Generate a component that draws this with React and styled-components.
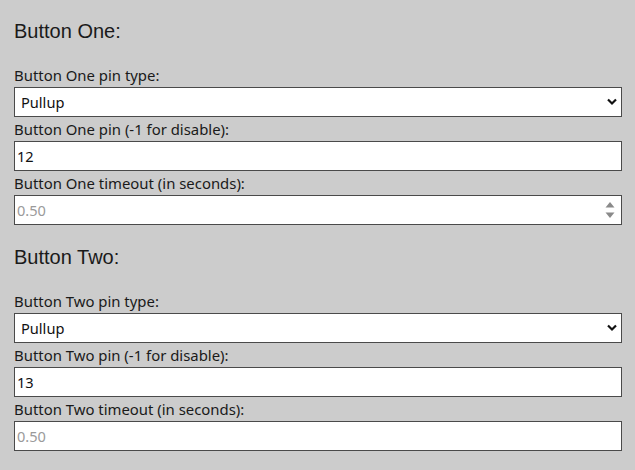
import styled, { createGlobalStyle } from 'styled-components';

const GlobalStyle = createGlobalStyle`
  html, body {
    margin: 0;
    padding: 0;
    background: #cccccc;
  }
  body {
    font-family: 'Noto Sans', 'Open Sans', sans-serif;
    color: #111;
  }
`;

const Page = styled.div`
  display: flex;
  flex-direction: column;
  gap: 20px;
  padding: 19px 13px 0 14px;
`;

const Section = styled.section`
  display: flex;
  flex-direction: column;
`;

const Heading = styled.h2`
  margin: 0 0 20px;
  font-family: 'Liberation Sans', Arial, sans-serif;
  font-weight: 400;
  font-size: 20px;
  line-height: 24px;
  color: #1a1a1a;
`;

const Field = styled.div`
  display: flex;
  flex-direction: column;
`;

const Label = styled.label`
  display: block;
  height: 24px;
  line-height: 24px;
  font-size: 14.9px;
  color: #1a1a1a;
`;

const Control = styled.div`
  position: relative;
  height: 30px;
`;

const Input = styled.input`
  box-sizing: border-box;
  width: 100%;
  height: 30px;
  margin: 0;
  padding: 0 2px;
  border: 1.5px solid #4a4a4a;
  border-radius: 0;
  background: #fff;
  font-family: 'Noto Sans', 'Open Sans', sans-serif;
  font-size: 14.6px;
  color: #111;
  outline: none;

  &::placeholder {
    color: #9a9a9a;
  }
`;

const Select = styled.select`
  box-sizing: border-box;
  width: 100%;
  height: 30px;
  margin: 0;
  padding: 0 6px;
  border: 1.5px solid #4a4a4a;
  border-radius: 0;
  background: #fff;
  appearance: none;
  font-family: 'Noto Sans', 'Open Sans', sans-serif;
  font-size: 14.6px;
  color: #111;
  outline: none;
`;

const Chevron = styled.svg`
  position: absolute;
  right: 5px;
  top: 11px;
  width: 10px;
  height: 8px;
  pointer-events: none;
`;

const Spinner = styled.svg`
  position: absolute;
  right: 7px;
  top: 5px;
  width: 10px;
  height: 20px;
  pointer-events: none;
`;

const buttons = [
  { name: 'One', pin: '12', spinner: true },
  { name: 'Two', pin: '13', spinner: false },
];

const App = () => {
  return (
    <Page>
      <GlobalStyle />
      {buttons.map((b) => (
        <Section key={b.name}>
          <Heading>Button {b.name}:</Heading>
          <Field>
            <Label>Button {b.name} pin type:</Label>
            <Control>
              <Select defaultValue="pullup">
                <option value="pullup">Pullup</option>
                <option value="pulldown">Pulldown</option>
              </Select>
              <Chevron viewBox="0 0 10 8">
                <path d="M1 1.5 L5 5.5 L9 1.5" fill="none" stroke="#111" strokeWidth="2.2" />
              </Chevron>
            </Control>
          </Field>
          <Field>
            <Label>Button {b.name} pin (-1 for disable):</Label>
            <Control>
              <Input type="text" defaultValue={b.pin} />
            </Control>
          </Field>
          <Field>
            <Label>Button {b.name} timeout (in seconds):</Label>
            <Control>
              <Input type="text" placeholder="0.50" />
              {b.spinner && (
                <Spinner viewBox="0 0 10 20">
                  <path d="M0.5 7.5 L5 2 L9.5 7.5 Z" fill="#8a8a8a" />
                  <path d="M0.5 12.5 L5 18 L9.5 12.5 Z" fill="#8a8a8a" />
                </Spinner>
              )}
            </Control>
          </Field>
        </Section>
      ))}
    </Page>
  );
};

export default App;
